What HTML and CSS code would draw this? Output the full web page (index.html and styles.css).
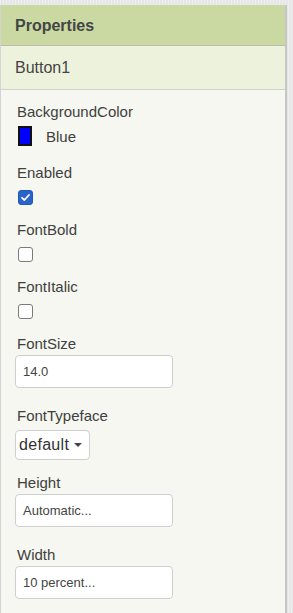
FILE: index.html
```html
<!DOCTYPE html>
<html lang="en">

<head>
	<meta charset="UTF-8">
	<title>Properties</title>
	<link rel="stylesheet" href="styles.css">
</head>

<body>
	<div class="panel">
		<div class="panel-header">Properties</div>
		<div class="component-name">Button1</div>
		<div class="property-list">
			<div class="property prop-color">
				<div class="prop-label">BackgroundColor</div>
				<div class="color-value"><span class="swatch"></span><span>Blue</span></div>
			</div>
			<div class="property prop-check">
				<div class="prop-label">Enabled</div>
				<span class="checkbox checked">
					<svg width="11" height="11" viewBox="0 0 11 11"><path d="M2 5.8 L4.4 8 L9 3" fill="none" stroke="#fff" stroke-width="1.8" stroke-linecap="round" stroke-linejoin="round"/></svg>
				</span>
			</div>
			<div class="property prop-check">
				<div class="prop-label">FontBold</div>
				<span class="checkbox"></span>
			</div>
			<div class="property prop-check">
				<div class="prop-label">FontItalic</div>
				<span class="checkbox"></span>
			</div>
			<div class="property prop-text">
				<div class="prop-label">FontSize</div>
				<div class="text-box">14.0</div>
			</div>
			<div class="property prop-select">
				<div class="prop-label">FontTypeface</div>
				<div class="select-box">default <span class="caret"></span></div>
			</div>
			<div class="property prop-text">
				<div class="prop-label">Height</div>
				<div class="text-box">Automatic...</div>
			</div>
			<div class="property prop-text">
				<div class="prop-label">Width</div>
				<div class="text-box">10 percent...</div>
			</div>
		</div>
	</div>
</body>

</html>
```

FILE: styles.css
```css
body {
	margin: 0;
	background-color: #e6e6e6;
	background-image: repeating-linear-gradient(90deg, rgba(255,255,255,0.35) 0 1px, transparent 1px 3px);
	font-family: "Liberation Sans", Arial, sans-serif;
	color: #3f3f3f;
}

.panel {
	margin-top: 5px;
	width: 284px;
	border-left: 1px solid #d4d4d4;
	border-right: 2px solid #c6c6c6;
	background: #f5f7f0;
	height: 608px;
}

.panel-header {
	height: 38px;
	line-height: 38px;
	padding: 2px 0 0 14px;
	background: #c9d9a1;
	border-bottom: 1px solid #b9bdb0;
	font-size: 16px;
	font-weight: bold;
	color: #454545;
}

.component-name {
	height: 42px;
	line-height: 42px;
	padding: 1px 0 0 14px;
	background: #edf2dd;
	border-bottom: 1px solid #cfd2ca;
	font-size: 16px;
	color: #444;
}

.property-list {
	padding: 13px 0 0 16px;
}

.prop-label {
	font-size: 15px;
	line-height: 18px;
}

.property {
	padding-bottom: 16px;
}

.color-value {
	display: flex;
	align-items: center;
	margin-top: 5px;
	font-size: 15px;
}
.prop-color {
	padding-bottom: 18px;
}

.swatch {
	width: 10px;
	height: 16px;
	margin: 0 14px 0 1px;
	border: 2px solid #111;
	background: #0000ff;
}

.checkbox {
	display: flex;
	align-items: center;
	justify-content: center;
	margin: 8px 0 0 1px;
	width: 13px;
	height: 13px;
	border: 1px solid #7a7a7a;
	border-radius: 3px;
	background: #fff;
}
.checkbox.checked {
	border-color: #1f5bbf;
	background: #2a64c9;
}

.text-box {
	margin: 2px 0 0 -2px;
	box-sizing: border-box;
	width: 158px;
	height: 33px;
	line-height: 31px;
	padding-left: 7px;
	border: 1px solid #cfcfcf;
	border-radius: 4px;
	background: #fff;
	font-size: 13px;
	color: #444;
}
.prop-text {
	padding-bottom: 19px;
}

.select-box {
	display: inline-flex;
	align-items: center;
	margin: 5px 0 0 -2px;
	box-sizing: border-box;
	height: 30px;
	padding: 0 7px 0 3px;
	border: 1px solid #cfcfcf;
	border-radius: 4px;
	background: #fff;
	font-size: 16px;
	letter-spacing: 0.3px;
	color: #333;
}
.prop-select {
	padding-bottom: 14px;
}

.caret {
	margin-left: 5px;
	border-left: 4px solid transparent;
	border-right: 4px solid transparent;
	border-top: 4px solid #444;
}
```
